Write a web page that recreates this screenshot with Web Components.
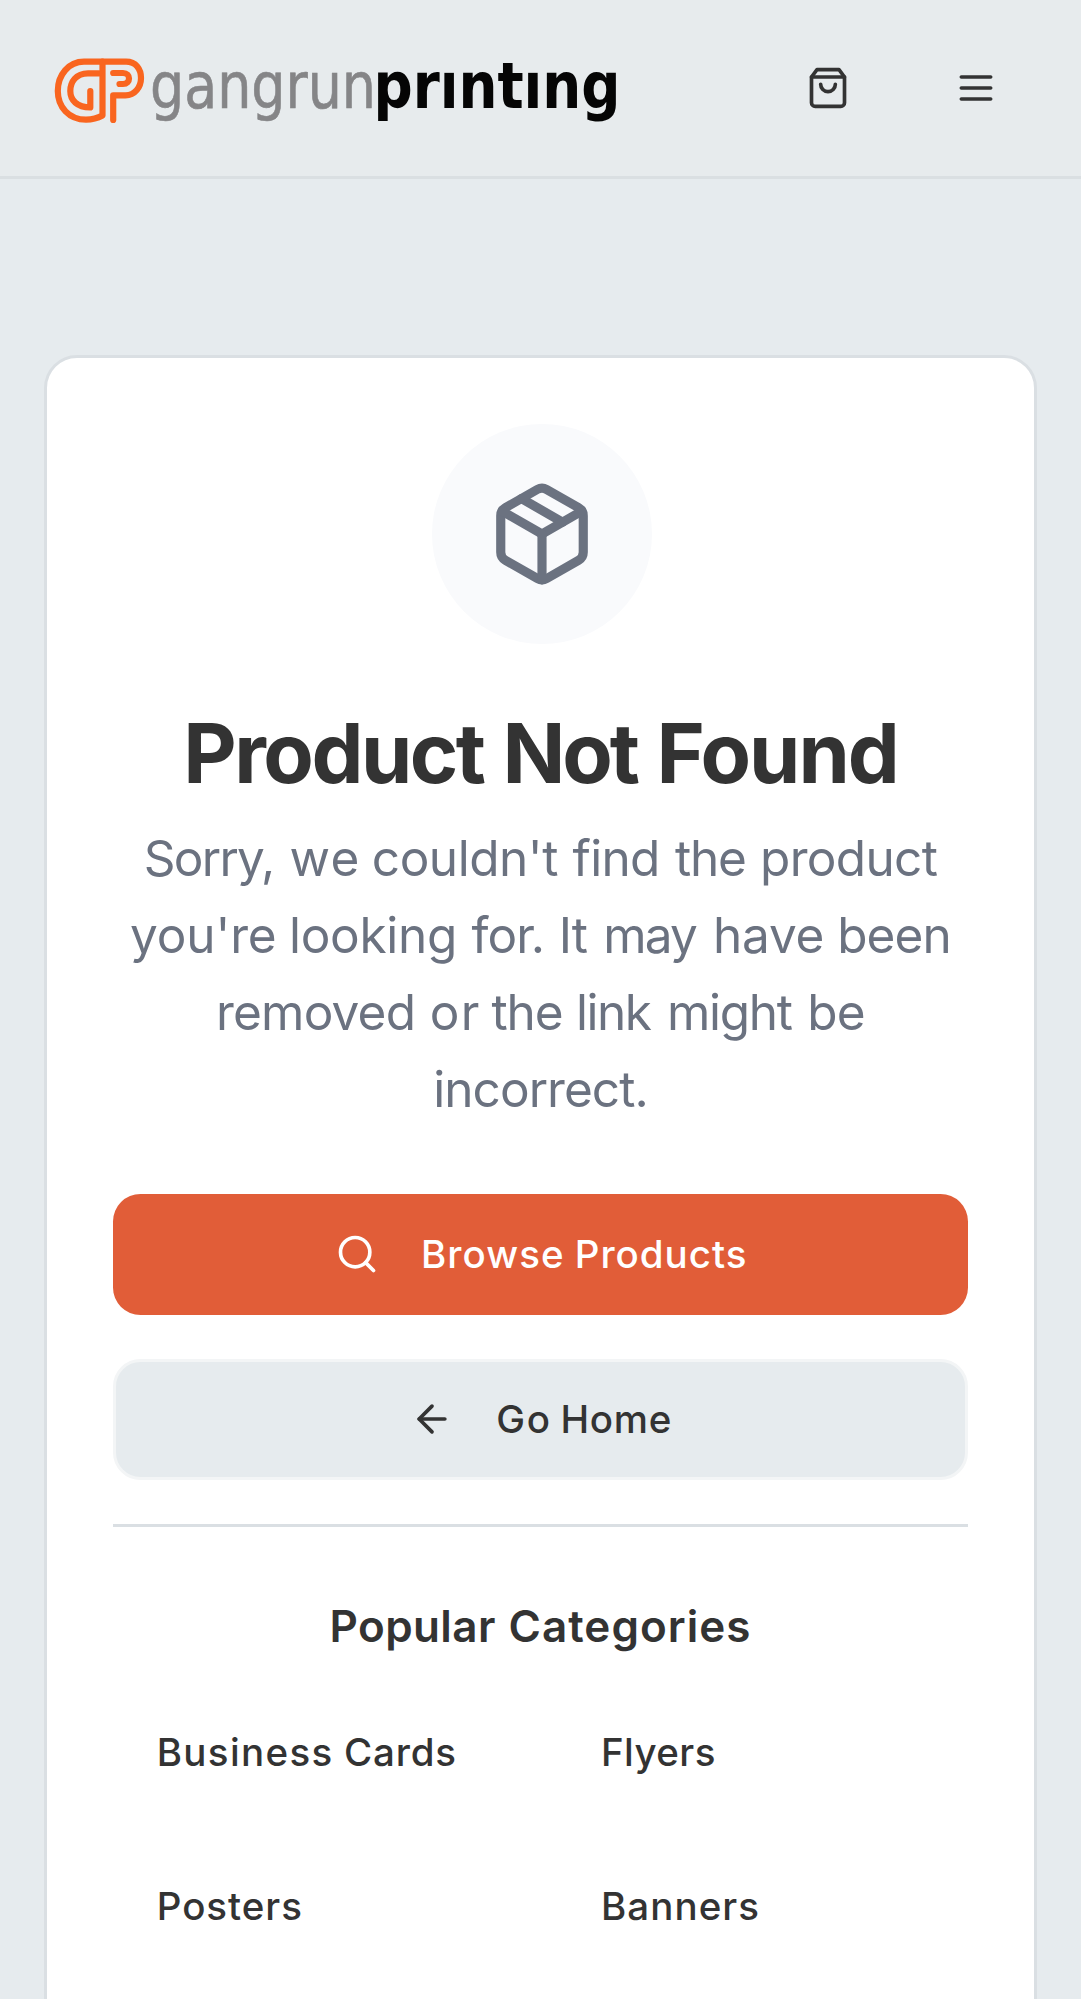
<!DOCTYPE html>
<html lang="en">
<head>
<meta charset="utf-8">
<title>Product Not Found</title>
<style>
html,body{margin:0;padding:0}
body{background:#e6ebee;color:#333;font-family:Inter,"Liberation Sans",sans-serif;height:1999px;overflow:hidden}
</style>
</head>
<body>
<not-found-page></not-found-page>
<script>
const ICONS = {
  bag: '<path d="M6 2 3 6v14a2 2 0 0 0 2 2h14a2 2 0 0 0 2-2V6l-3-4Z"/><path d="M3 6h18"/><path d="M16 10a4 4 0 0 1-8 0"/>',
  menu: '<path d="M4 6h16M4 12h16M4 18h16"/>',
  search: '<circle cx="11" cy="11" r="8"/><path d="m21 21-4.3-4.3"/>',
  back: '<path d="m12 19-7-7 7-7"/><path d="M19 12H5"/>',
  package: '<path d="m7.5 4.27 9 5.15"/><path d="M21 8a2 2 0 0 0-1-1.73l-7-4a2 2 0 0 0-2 0l-7 4A2 2 0 0 0 3 8v8a2 2 0 0 0 1 1.73l7 4a2 2 0 0 0 2 0l7-4A2 2 0 0 0 21 16Z"/><path d="m3.3 7 8.7 5 8.7-5"/><path d="M12 22V12"/>'
};
// One line of words, each given as [text, letter spacing, spacing after the word].
const line = (...words) => '<span class="line">' + words.map(([t, ls, ws], i) =>
  `<span style="letter-spacing:${ls}px;word-spacing:${ws || 0}px">${t}${i < words.length - 1 ? ' ' : ''}</span>`).join('') + '</span>';

function define(name, html) {
  customElements.define(name, class extends HTMLElement {
    constructor() {
      super();
      this.attachShadow({mode: 'open'}).innerHTML = html;
    }
  });
}
customElements.define('line-icon', class extends HTMLElement {
  connectedCallback() {
    if (this.shadowRoot) return;
    this.attachShadow({mode: 'open'}).innerHTML = `<style>:host{display:block;flex:none;width:var(--icon-size,44px);height:var(--icon-size,44px)}svg{display:block;width:100%;height:100%}</style>
    <svg viewBox="0 0 24 24" fill="none" stroke="currentColor" stroke-width="2" stroke-linecap="round" stroke-linejoin="round">${ICONS[this.getAttribute('name')]}</svg>`;
  }
});
define('brand-logo', `<style>:host{display:block}svg{display:block;overflow:visible}</style>
<svg width="580" height="84" viewBox="44 46 580 84">
  <g fill="none" stroke="#f9651f" stroke-width="6.200" stroke-linecap="round" stroke-linejoin="round">
    <path d="M102.500 61.700H84C68.500 61.700 57.800 75 57.800 91S69 119.600 86 119.600C93 119.600 98 118 102.500 115.500Z"/>
    <path d="M99 73.300H88C76 73.300 70.300 82 70.300 91S77 107.500 90.300 107.500V91"/>
    <path d="M102.500 61.700H126C136 61.700 141 69 141 78S135 95.300 125.500 95.300H113.200V120"/>
    <path d="M113.200 73H123C127 73 129 75.500 129 78.500S127 84 123 84H119.500"/>
  </g>
  <text x="150" y="107.500" font-family="DejaVu Sans Condensed,DejaVu Sans,sans-serif" font-size="64" fill="#858587" stroke="#858587" stroke-width=".6" textLength="226" lengthAdjust="spacingAndGlyphs">gangrun</text>
  <text x="373.500" y="107.500" font-family="DejaVu Sans Condensed,DejaVu Sans,sans-serif" font-weight="700" font-size="64" fill="#050505" textLength="247" lengthAdjust="spacingAndGlyphs">prıntıng</text>
</svg>`);
define('icon-button', `<style>:host{display:flex;width:121px;height:121px;align-items:center;justify-content:center}</style><slot></slot>`);
define('site-header', `<style>
:host{display:flex;box-sizing:border-box;height:178.750px;padding:0 44.500px 0 44px;align-items:center;justify-content:space-between;border-bottom:3px solid #dadfe2;background:#e7ebed}
nav{display:flex;gap:27.500px}
</style>
<brand-logo></brand-logo>
<nav><icon-button><line-icon name="bag"></line-icon></icon-button><icon-button><line-icon name="menu"></line-icon></icon-button></nav>`);
define('action-button', `<style>
:host{display:flex;box-sizing:border-box;height:121px;align-items:center;justify-content:center;gap:42px;padding-left:1.400px;border-radius:27.500px;background:#e15d38;color:#fff;font-size:38.500px;font-weight:500;line-height:55px}
:host([variant=secondary]){background:#e6ebee;color:#333;border:3px solid #f3f5f6}
</style><slot name="icon"></slot><span><slot></slot></span>`);
define('category-link', `<style>:host{display:flex;align-items:center;height:121px;padding:0 44px;font-size:38.500px;font-weight:500;line-height:55px}</style><slot></slot>`);
define('message-card', `<style>
:host{display:block;box-sizing:border-box;height:1750px;border:3px solid #dadfe3;border-radius:33px;background:#fff;padding:66px 65.750px}
.badge{width:220px;height:220px;margin:0 0 0 319.300px;border-radius:50%;background:#f9fafc;display:flex;align-items:center;justify-content:center;color:#6b7280;--icon-size:110px}
h1{margin:60.500px 0 0;font-size:82.500px;line-height:99px;font-weight:700;text-align:center;white-space:nowrap}
p{margin:16.500px 0 0;font-size:49.500px;line-height:77px;text-align:center;color:#6b7280;white-space:nowrap}
</style>
<div class="badge"><line-icon name="package"></line-icon></div>
<h1><slot name="title"></slot></h1>
<p><slot name="text"></slot></p>
<slot></slot>`);
define('button-stack', `<style>:host{display:flex;flex-direction:column;gap:44px;margin-top:66px}</style><slot></slot>`);
define('category-section', `<style>
:host{display:block;margin-top:44px;border-top:3px solid #dadfe3;padding-top:66px}
h2{margin:0 0 33px;font-size:44px;line-height:66px;font-weight:600;text-align:center}
.grid{display:grid;grid-template-columns:1fr 1fr;gap:33px}
</style><h2><slot name="title"></slot></h2><div class="grid"><slot></slot></div>`);
define('not-found-page', `<style>:host{display:block;height:1999px;overflow:hidden}main{padding:176px 44px 0}.text .line{display:block}</style>
<site-header></site-header>
<main><message-card>
  <span slot="title">${line(['Product', -2.51, 2.05], ['Not', -3.13, 3.31], ['Found', -2.05])}</span>
  <span slot="text" class="text">${
    line(['Sorry,', -1.74, 3.88], ['we', 1.36, -4.25], ["couldn't", -.47, 1.28], ['find', -.71, 2.26], ['the', -1.27, 1.73], ['product', -.67]) + ' ' +
    line(["you're", -.15, -1.3], ['looking', -.29, .77], ['for.', -.94, 1.56], ['It', -.82, 2.9], ['may', -1.85, 5.04], ['have', -.22, -.76], ['been', -.89]) + ' ' +
    line(['removed', -.81, 1.53], ['or', 1.15, -4.07], ['the', -1.12, .83], ['link', -1.53, 4.35], ['might', -1.34, 3.23], ['be', -.79]) + ' ' +
    line(['incorrect.', -.96])}</span>
  <button-stack>
    <action-button><line-icon slot="icon" name="search"></line-icon>${line(['Browse', 1.05, -1.2], ['Products', .98])}</action-button>
    <action-button variant="secondary"><line-icon slot="icon" name="back"></line-icon>${line(['Go', 1.67, -3.2], ['Home', .71])}</action-button>
  </button-stack>
  <category-section><span slot="title">${line(['Popular', .42, 1.03], ['Categories', 1.04])}</span>
    <category-link>${line(['Business', 1.34, -1.23], ['Cards', .8])}</category-link>
    <category-link>${line(['Flyers', .42])}</category-link>
    <category-link>${line(['Posters', .95])}</category-link>
    <category-link>${line(['Banners', 1.05])}</category-link>
  </category-section>
</message-card></main>`);
</script>
</body>
</html>
